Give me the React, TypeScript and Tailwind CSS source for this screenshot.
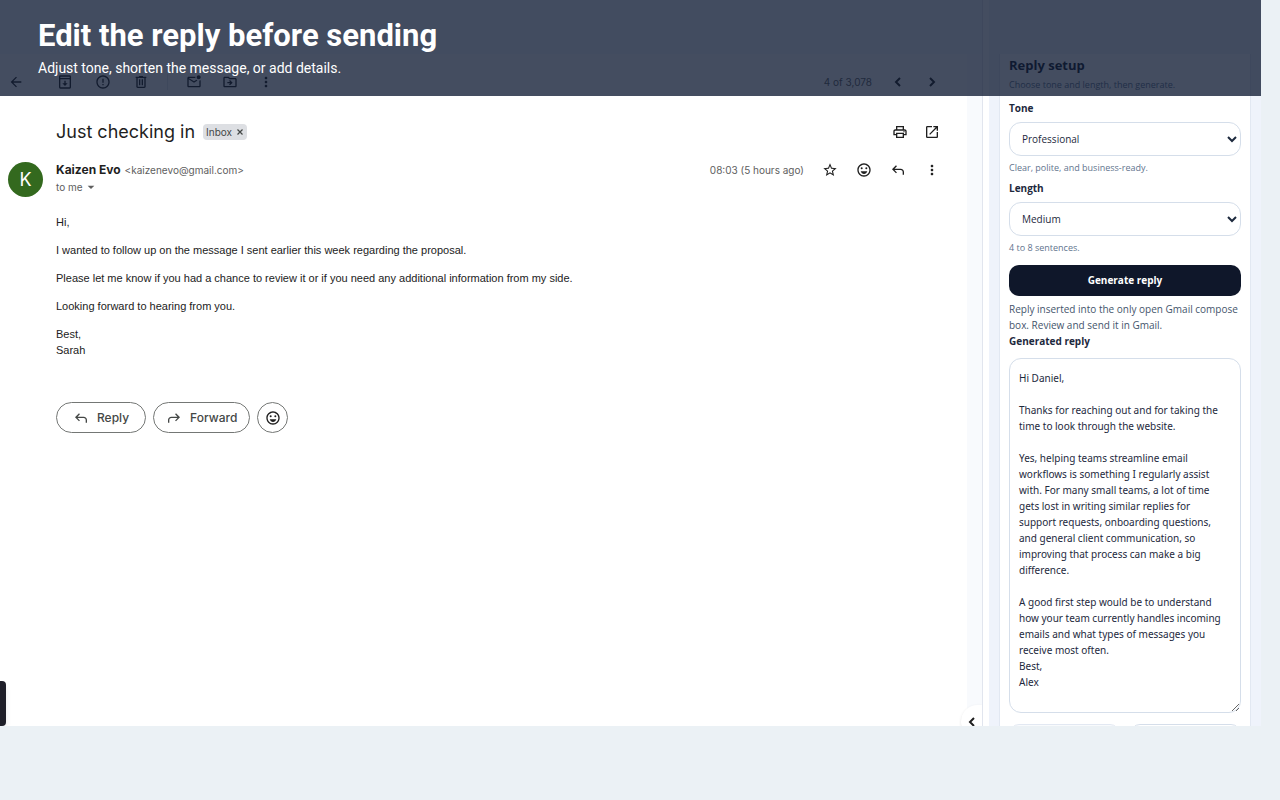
import { useState, type ReactNode } from "react";
import {
    MdArrowBack,
    MdArrowDropDown,
    MdErrorOutline,
    MdMoreVert,
    MdOpenInNew,
    MdOutlineDriveFileMove,
    MdOutlineEmojiEmotions,
    MdOutlineMarkEmailUnread,
    MdOutlinePrint,
    MdStarBorder,
} from "react-icons/md";

const TONES = ["Professional", "Friendly", "Casual"];
const LENGTHS = ["Short", "Medium", "Long"];

const GENERATED_REPLY = `Hi Daniel,

Thanks for reaching out and for taking the time to look through the website.

Yes, helping teams streamline email workflows is something I regularly assist with. For many small teams, a lot of time gets lost in writing similar replies for support requests, onboarding questions, and general client communication, so improving that process can make a big difference.

A good first step would be to understand how your team currently handles incoming emails and what types of messages you receive most often.
Best,
Alex`;

const ArchiveIcon = () => (
    <svg viewBox="0 0 24 24" fill="currentColor" className="size-4">
        <path fillRule="evenodd" d="M5 2h14a2 2 0 0 1 2 2v16a2 2 0 0 1-2 2H5a2 2 0 0 1-2-2V4a2 2 0 0 1 2-2zM5 4v2h14V4zM5 8v12h14V8zM11 10h2v4h3l-4 4-4-4h3z" />
    </svg>
);

const TrashIcon = () => (
    <svg viewBox="0 0 24 24" fill="currentColor" className="size-4">
        <path d="M7 21q-.825 0-1.412-.587T5 19V6H4V4h5V3h6v1h5v2h-1v13q0 .825-.587 1.413T17 21zM17 6H7v13h10zM9 17h2V8H9zm4 0h2V8h-2z" />
    </svg>
);

const ReplyIcon = ({ className = "size-4" }: { className?: string }) => (
    <svg viewBox="0 0 24 24" fill="currentColor" className={className}>
        <path d="M19 19v-4q0-1.25-.875-2.125T16 12H6.8l3.6 3.6L9 17l-6-6 6-6 1.4 1.4L6.8 10H16q2.075 0 3.538 1.462T21 15v4z" />
    </svg>
);

const ChevronIcon = ({ className = "size-4" }: { className?: string }) => (
    <svg viewBox="0 0 24 24" fill="none" stroke="currentColor" strokeWidth="3" className={className}>
        <path d="M15 6l-6 6 6 6" />
    </svg>
);

const CloseIcon = () => (
    <svg viewBox="0 0 8 8" fill="none" stroke="currentColor" strokeWidth="1.2" className="size-2">
        <path d="M1.5 1.5l5 5M6.5 1.5l-5 5" />
    </svg>
);

const IconButton = ({ label, children }: { label: string; children: ReactNode }) => (
    <button type="button" aria-label={label} className="flex size-4 items-center justify-center">
        {children}
    </button>
);

const Banner = () => (
    <header className="absolute inset-x-0 top-0 z-20 h-24 bg-[#0f1b33]/78 px-[38px] pt-4 font-['Roboto',sans-serif] text-white">
        <h1 className="text-[31px] leading-10 font-bold">Edit the reply before sending</h1>
        <p className="text-sm leading-6">Adjust tone, shorten the message, or add details.</p>
    </header>
);

const Toolbar = () => (
    <div className="flex h-14 items-center pr-[27px] pl-2">
        <IconButton label="Back"><MdArrowBack className="size-4" /></IconButton>
        <div className="ml-[33px] flex items-center gap-[22px]">
            <IconButton label="Archive"><ArchiveIcon /></IconButton>
            <IconButton label="Report spam"><MdErrorOutline className="size-4" /></IconButton>
            <IconButton label="Delete"><TrashIcon /></IconButton>
        </div>
        <div className="mx-[18px] h-4 w-px bg-gray-200" />
        <div className="flex items-center gap-5">
            <IconButton label="Mark as unread"><MdOutlineMarkEmailUnread className="size-4" /></IconButton>
            <IconButton label="Move to"><MdOutlineDriveFileMove className="size-4" /></IconButton>
            <IconButton label="More"><MdMoreVert className="size-4" /></IconButton>
        </div>
        <span className="ml-auto text-[10px] text-[#5e5e5e]">4 of 3,078</span>
        <div className="ml-[18px] flex items-center gap-[18px]">
            <IconButton label="Newer"><ChevronIcon /></IconButton>
            <IconButton label="Older"><ChevronIcon className="size-4 -scale-x-100" /></IconButton>
        </div>
    </div>
);

const Message = () => (
    <article className="pr-[27px]">
        <div className="flex h-11 items-center pl-14">
            <h2 className="text-lg leading-6">Just checking in</h2>
            <span className="ml-2 flex h-4 items-center gap-1 rounded bg-[#dddfe3] px-[3px] text-[10px] text-[#444746]">
                Inbox
                <button type="button" aria-label="Remove label"><CloseIcon /></button>
            </span>
            <div className="ml-auto flex gap-4">
                <IconButton label="Print"><MdOutlinePrint className="size-4" /></IconButton>
                <IconButton label="Open in new window"><MdOpenInNew className="size-4" /></IconButton>
            </div>
        </div>

        <div className="flex items-start pt-2 pl-2">
            <div className="flex size-[35px] items-center justify-center rounded-full bg-[#33691e] text-lg text-white">
                K
            </div>
            <div className="ml-[13px]">
                <div className="flex h-4 items-center gap-1">
                    <span className="text-xs font-bold">Kaizen Evo</span>
                    <span className="text-[10px] text-[#5e5e5e]">&lt;kaizenevo@gmail.com&gt;</span>
                </div>
                <button type="button" className="flex h-[18px] items-center text-[10px] text-[#5e5e5e]">
                    to me
                    <MdArrowDropDown className="size-4" />
                </button>
            </div>
            <div className="ml-auto flex h-4 items-center gap-[18px]">
                <span className="text-[10px] text-[#5e5e5e]">08:03 (5 hours ago)</span>
                <IconButton label="Star"><MdStarBorder className="size-4" /></IconButton>
                <IconButton label="Add reaction"><MdOutlineEmojiEmotions className="size-4" /></IconButton>
                <IconButton label="Reply"><ReplyIcon /></IconButton>
                <IconButton label="More options"><MdMoreVert className="size-4" /></IconButton>
            </div>
        </div>

        <div className="space-y-3 pt-[17px] pl-14 font-['Liberation_Sans',sans-serif] text-[11px] leading-4 text-[#222222]">
            <p>Hi,</p>
            <p>I wanted to follow up on the message I sent earlier this week regarding the proposal.</p>
            <p>
                Please let me know if you had a chance to review it or if you need any additional information from my
                side.
            </p>
            <p>Looking forward to hearing from you.</p>
            <p>
                Best,
                <br />
                Sarah
            </p>
        </div>

        <div className="mt-11 flex gap-[7px] pl-14 text-xs font-medium text-[#444746]">
            <button type="button" className="flex h-[31px] items-center gap-2 rounded-full border border-[#747775] px-4">
                <ReplyIcon />
                Reply
            </button>
            <button type="button" className="flex h-[31px] items-center gap-2 rounded-full border border-[#747775] px-3">
                <ReplyIcon className="size-4 -scale-x-100" />
                Forward
            </button>
            <button
                type="button"
                aria-label="Add reaction"
                className="flex size-[31px] items-center justify-center rounded-full border border-[#747775] text-[#1f1f1f]"
            >
                <MdOutlineEmojiEmotions className="size-4" />
            </button>
        </div>
    </article>
);

type SelectFieldProps = {
    id: string;
    label: string;
    hint: string;
    options: string[];
    value: string;
    onChange: (value: string) => void;
};

const SelectField = ({ id, label, hint, options, value, onChange }: SelectFieldProps) => (
    <div className="flex flex-col">
        <label htmlFor={id} className="text-[10px] leading-4 font-bold">{label}</label>
        <select
            id={id}
            value={value}
            onChange={(e) => onChange(e.target.value)}
            className="mt-1.5 h-[34px] rounded-xl border border-[#d5deea] bg-white pl-2 text-[10px]"
        >
            {options.map((option) => (
                <option key={option}>{option}</option>
            ))}
        </select>
        <p className="mt-1 text-[9px] leading-4 text-slate-500">{hint}</p>
    </div>
);

const ReplyPanel = () => {
    const [tone, setTone] = useState("Professional");
    const [length, setLength] = useState("Medium");
    const [reply, setReply] = useState(GENERATED_REPLY);

    return (
        <aside className="w-[272px] shrink-0 bg-[#eff3fb] px-[10px] pt-[54px] font-['Open_Sans',sans-serif] text-slate-800">
            <div className="flex flex-col border-x border-[#e2e8f2] bg-white px-[9px] pt-[3px] pb-4">
                <h2 className="text-[13px] leading-4 font-bold text-slate-900">Reply setup</h2>
                <p className="mt-1 text-[9px] leading-4 text-slate-500">Choose tone and length, then generate.</p>

                <div className="mt-[7px] flex flex-col gap-1">
                    <SelectField
                        id="tone"
                        label="Tone"
                        hint="Clear, polite, and business-ready."
                        options={TONES}
                        value={tone}
                        onChange={setTone}
                    />
                    <SelectField
                        id="length"
                        label="Length"
                        hint="4 to 8 sentences."
                        options={LENGTHS}
                        value={length}
                        onChange={setLength}
                    />
                </div>

                <button type="button" className="mt-[9px] h-[31px] rounded-[10px] bg-[#0f172a] text-[10px] font-bold text-white">
                    Generate reply
                </button>
                <p className="mt-[5px] text-[10px] leading-4 text-slate-600">
                    Reply inserted into the only open Gmail compose box. Review and send it in Gmail.
                </p>
                <label htmlFor="reply" className="text-[10px] leading-4 font-bold">Generated reply</label>
                <textarea
                    id="reply"
                    value={reply}
                    onChange={(e) => setReply(e.target.value)}
                    className="mt-[9px] h-[355px] resize overflow-hidden rounded-xl border border-[#d5deea] bg-white py-[11px] pr-4 pl-[9px] font-['Noto_Sans',sans-serif] text-[10px] leading-4"
                />
                <div className="mt-[11px] flex gap-[10px]">
                    <button type="button" aria-label="Copy" className="h-[31px] flex-1 rounded-[10px] border border-[#e2e8f2] bg-slate-50" />
                    <button type="button" aria-label="Insert" className="h-[31px] flex-1 rounded-[10px] border border-[#d5deea] bg-white" />
                </div>
            </div>
        </aside>
    );
};

export default function App() {
    return (
        <div className="h-screen bg-[#ebf1f5] pr-[19px] pb-[74px]">
            <div className="relative flex h-full overflow-hidden bg-[#f6f8fc]">
                <Banner />

                <main className="relative flex min-w-0 flex-1 overflow-hidden pt-[54px] font-['Inter',sans-serif] text-[#1f1f1f]">
                    <div className="min-w-0 flex-1 bg-white">
                        <Toolbar />
                        <Message />
                    </div>
                    <div className="w-[15px] bg-[#f8fafd]" />
                    <div className="absolute bottom-0 left-0 h-[45px] w-1.5 rounded-r bg-[#1f1f29] shadow-md" />
                    <button
                        type="button"
                        aria-label="Show side panel"
                        className="absolute right-0 -bottom-3 flex h-[33px] w-[21px] items-center justify-center rounded-l-full bg-white shadow"
                    >
                        <ChevronIcon />
                    </button>
                </main>
                <div className="w-[7px] border-l border-[#e1e5ee] bg-white" />

                <ReplyPanel />
            </div>
        </div>
    );
}
